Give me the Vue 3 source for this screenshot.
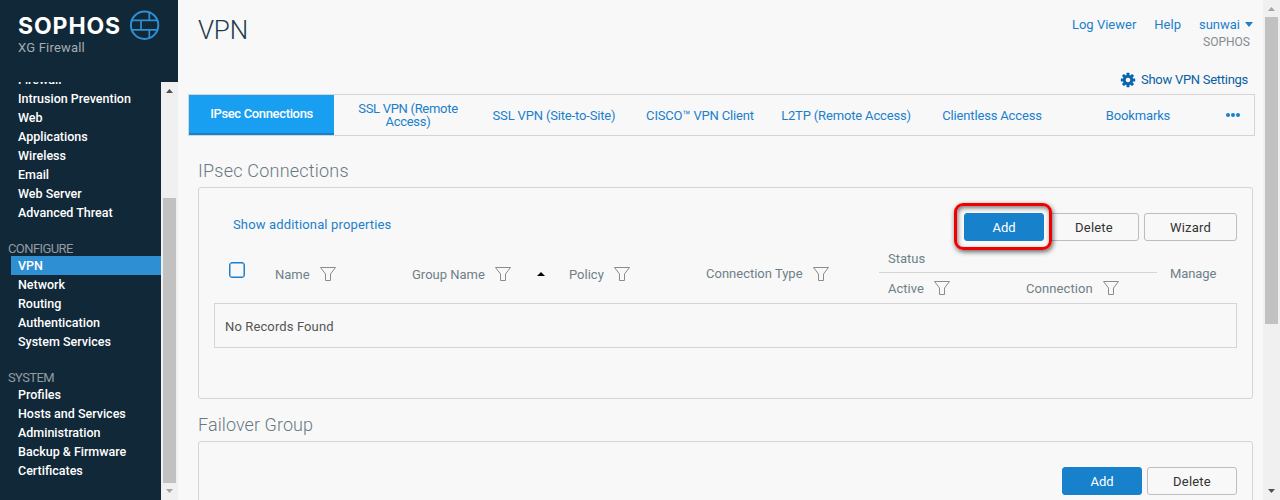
<template>
  <div class="app">
    <aside class="sidebar">
      <header class="brand">
        <div class="brand-text">
          <div class="brand-name">SOPHOS</div>
          <div class="brand-product">XG Firewall</div>
        </div>
        <svg class="brand-icon" width="32" height="32" viewBox="0 0 32 32" fill="none" stroke="#2f8fd3" stroke-width="2">
          <circle cx="16.6" cy="16.2" r="13.7" />
          <path d="M4 11.3H29.2M4 20.8H29.2M13 11.3V20.8M21.3 3.6V11.3M21.3 20.8V28.6" stroke-width="1.7" />
        </svg>
      </header>
      <div class="nav-area">
        <nav class="nav">
          <template v-for="group in groups" :key="group.label">
            <div v-if="group.label" class="nav-label">{{ group.label }}</div>
            <a
              v-for="item in group.items"
              :key="item"
              class="nav-item"
              :class="{ active: item === 'VPN' }"
            >{{ item }}</a>
          </template>
        </nav>
        <div class="scrollbar nav-scroll">
          <span class="arrow up"></span>
          <span class="thumb"></span>
          <span class="arrow down muted"></span>
        </div>
      </div>
    </aside>

    <main class="main">
      <header class="topbar">
        <h1>VPN</h1>
        <div class="account">
          <div class="account-links">
            <a class="log">Log Viewer</a>
            <a class="help">Help</a>
            <a class="user">sunwai<span class="caret"></span></a>
          </div>
          <div class="company">SOPHOS</div>
          <a class="settings">
            <svg width="16" height="16" viewBox="0 0 16 16">
              <g fill="#0a66ad">
                <rect v-for="a in [0, 45, 90, 135]" :key="a" x="6.5" y="0.8" width="3" height="14.4" rx="0.5" :transform="`rotate(${a} 8 8)`" />
                <circle cx="8" cy="8" r="5.2" />
              </g>
              <circle cx="8" cy="8" r="2.3" fill="#f8f8f8" />
            </svg>
            <span>Show VPN Settings</span>
          </a>
        </div>
      </header>

      <div class="tabs">
        <a v-for="(tab, i) in tabs" :key="tab" class="tab" :class="{ active: i === 0 }"><span>{{ tab }}</span></a>
        <a class="more"><i></i><i></i><i></i></a>
      </div>

      <h2>IPsec Connections</h2>
      <section class="panel connections">
        <div class="toolbar">
          <a class="show-more">Show additional properties</a>
          <div class="buttons">
            <div class="highlight"><button class="btn primary">Add</button></div>
            <button class="btn delete">Delete</button>
            <button class="btn wizard">Wizard</button>
          </div>
        </div>
        <div class="thead">
          <div class="check"><span class="checkbox"></span></div>
          <div v-for="col in columns" :key="col.key" class="th" :class="col.key">
            <span class="th-text">{{ col.text }}</span>
            <svg class="filter" width="16" height="14" viewBox="0 0 16 14"><path :d="filterPath" /></svg>
            <span v-if="col.sorted" class="sort"></span>
          </div>
          <div class="status">
            <div class="status-title">Status</div>
            <div class="status-cols">
              <div class="th active-col">
                <span class="th-text">Active</span>
                <svg class="filter" width="16" height="14" viewBox="0 0 16 14"><path :d="filterPath" /></svg>
              </div>
              <div class="th connection-col">
                <span class="th-text">Connection</span>
                <svg class="filter" width="16" height="14" viewBox="0 0 16 14"><path :d="filterPath" /></svg>
              </div>
            </div>
          </div>
          <div class="manage">Manage</div>
        </div>
        <div class="empty">No Records Found</div>
      </section>

      <h2 class="failover-title">Failover Group</h2>
      <section class="panel failover">
        <div class="buttons">
          <button class="btn primary">Add</button>
          <button class="btn delete">Delete</button>
        </div>
      </section>
    </main>

    <div class="scrollbar page-scroll">
      <span class="arrow up muted"></span>
      <span class="thumb"></span>
      <span class="arrow down"></span>
    </div>
  </div>
</template>

<script setup>
const groups = [
  {
    label: '',
    items: ['Firewall', 'Intrusion Prevention', 'Web', 'Applications', 'Wireless', 'Email', 'Web Server', 'Advanced Threat']
  },
  {
    label: 'CONFIGURE',
    items: ['VPN', 'Network', 'Routing', 'Authentication', 'System Services']
  },
  {
    label: 'SYSTEM',
    items: ['Profiles', 'Hosts and Services', 'Administration', 'Backup & Firmware', 'Certificates']
  }
]

const tabs = [
  'IPsec Connections',
  'SSL VPN (Remote Access)',
  'SSL VPN (Site-to-Site)',
  'CISCO™ VPN Client',
  'L2TP (Remote Access)',
  'Clientless Access',
  'Bookmarks'
]

const columns = [
  { key: 'name', text: 'Name' },
  { key: 'group', text: 'Group Name', sorted: true },
  { key: 'policy', text: 'Policy' },
  { key: 'type', text: 'Connection Type' }
]

const filterPath = 'M0.5 0.5H15.5L10.5 7V13.5H5.5V7Z'
</script>

<style>
body {
  background: #f8f8f8;
  overflow: hidden;
}
</style>

<style scoped>
.app {
  display: flex;
  width: 1280px;
  height: 500px;
  overflow: hidden;
  background: #f8f8f8;
  font-family: Roboto, 'Liberation Sans', sans-serif;
  font-size: 13px;
  line-height: 19px;
}

.app * {
  box-sizing: border-box;
}

h1,
h2 {
  margin: 0;
  font-weight: 300;
}

/* Sidebar */
.sidebar {
  width: 178px;
  flex: none;
  display: flex;
  flex-direction: column;
  background: #112838;
}

.brand {
  height: 82px;
  flex: none;
  display: flex;
  padding: 9px 0 0 18px;
}

.brand-text {
  width: 110px;
}

.brand-name {
  margin-top: 4px;
  height: 26px;
  font-family: Inter, sans-serif;
  font-size: 23px;
  line-height: 26px;
  font-weight: 700;
  letter-spacing: 0.9px;
  color: #fff;
}

.brand-product {
  color: #a3adb4;
  line-height: 18px;
  letter-spacing: 0.2px;
}

.nav-area {
  flex: 1;
  min-height: 0;
  display: flex;
}

.nav {
  width: 161px;
  overflow: hidden;
  white-space: nowrap;
}

.nav-item {
  display: block;
  height: 19px;
  margin-left: 11px;
  padding-left: 7px;
  color: #fff;
  font-weight: 500;
  font-size: 12.5px;
}

.nav-item:first-child {
  margin-top: -12px;
}

.nav-item.active {
  background: #2f8fd3;
}

.nav-label {
  height: 34px;
  padding: 17px 0 0 8px;
  line-height: 19px;
  letter-spacing: -0.6px;
  color: #929ba1;
}

/* Scrollbars */
.scrollbar {
  width: 17px;
  flex: none;
  display: flex;
  flex-direction: column;
  align-items: center;
  background: #f0f0f0;
}

.scrollbar .thumb {
  width: 13px;
  background: #c1c1c1;
}

.arrow {
  width: 7px;
  height: 4px;
  background: #505050;
}

.arrow.up {
  clip-path: polygon(50% 0, 100% 100%, 0 100%);
}

.arrow.down {
  clip-path: polygon(0 0, 100% 0, 50% 100%);
}

.arrow.muted {
  background: #a3a3a3;
}

.nav-scroll .up {
  margin-top: 7px;
}

.nav-scroll .thumb {
  height: 285px;
  margin: 105px 0 6px;
}

.page-scroll .up {
  margin-top: 7px;
}

.page-scroll .thumb {
  height: 307px;
  margin: 6px 0 165px;
}

/* Main */
.main {
  width: 1085px;
  flex: none;
  padding: 0 8px 0 10px;
}

a {
  color: #1b7fcc;
}

.topbar {
  display: flex;
  justify-content: space-between;
  height: 94px;
  padding: 15px 0 0 10px;
}

h1 {
  font-size: 26px;
  line-height: 30px;
  letter-spacing: -0.2px;
  color: #20384a;
}

.account {
  display: flex;
  flex-direction: column;
  align-items: flex-end;
}

.account-links {
  display: flex;
  gap: 18px;
}

.caret {
  display: inline-block;
  margin: 0 2px 2px 5px;
  border: 4px solid transparent;
  border-top: 5px solid #1b7fcc;
  border-bottom: 0;
}

.company {
  margin: -1px 5px 0 0;
  color: #858b91;
  font-size: 12px;
}

.settings {
  display: flex;
  align-items: center;
  gap: 5px;
  margin: 18px 7px 0 0;
  letter-spacing: -0.28px;
  color: #0a5fa3;
}

.tabs {
  display: flex;
  width: 1067px;
  height: 42px;
  border: 1px solid #d5d5d5;
}

.tab {
  width: 146px;
  display: flex;
  align-items: center;
  justify-content: center;
  padding: 0 20px;
  text-align: center;
  line-height: 13px;
  letter-spacing: -0.16px;
  white-space: nowrap;
}

.tab:nth-child(2) {
  letter-spacing: -0.3px;
  white-space: normal;
}

.tab.active {
  width: 145px;
  margin-right: 1px;
  padding-bottom: 1px;
  color: #fff;
  font-weight: 500;
  letter-spacing: -0.35px;
  background: #189ff2;
  border-bottom: 2px solid #1780cb;
}

.more {
  flex: 1;
  display: flex;
  align-items: center;
  justify-content: center;
  gap: 1px;
  padding-bottom: 1px;
}

.more i {
  width: 4px;
  height: 4px;
  border-radius: 50%;
  background: #1b7fcc;
}

h2 {
  margin: 23px 0 0 10px;
  height: 28px;
  font-size: 18px;
  line-height: 24px;
  letter-spacing: 0.22px;
  color: #697983;
}

.panel {
  width: 1055px;
  margin-left: 10px;
  border: 1px solid #d5d5d5;
  border-radius: 3px;
}

.connections {
  height: 212px;
  padding: 25px 15px 0;
}

.toolbar {
  display: flex;
  justify-content: space-between;
  height: 30px;
}

.show-more {
  margin: 2px 0 0 19px;
  letter-spacing: 0.15px;
}

.buttons {
  display: flex;
  justify-content: flex-end;
  gap: 5px;
}

.btn {
  height: 28px;
  padding: 0;
  border: 1px solid #bdbdbd;
  border-radius: 3px;
  background: #f8f8f8;
  color: #333;
  font: inherit;
  letter-spacing: 0.2px;
}

.btn.primary {
  width: 80px;
  background: #1881cb;
  border-color: #1881cb;
  color: #fff;
  letter-spacing: 0;
}

.btn.delete {
  width: 90px;
}

.btn.wizard {
  width: 93px;
}

/* Callout ring drawn round the Add button */
.highlight {
  position: relative;
}

.highlight::after {
  content: '';
  position: absolute;
  inset: -10px -8px -7px -10px;
  border: 3px solid #f20000;
  border-radius: 9px;
  box-shadow: 1px 2px 5px rgba(0, 0, 0, 0.6), inset 1px 2px 4px rgba(0, 0, 0, 0.5);
}

.thead {
  display: flex;
  height: 60px;
  color: #6f7f89;
}

.check {
  width: 61px;
  padding: 19px 0 0 15px;
}

.checkbox {
  display: block;
  width: 16px;
  height: 16px;
  border: 1.5px solid #1b7fcc;
  border-radius: 3px;
  box-shadow: inset 0 0 0 0.5px #1b7fcc;
}

.th {
  display: flex;
  align-items: center;
  height: 62px;
  gap: 10px;
  white-space: nowrap;
}

.filter {
  flex: none;
  fill: none;
  stroke: #8b8b8b;
}

.sort {
  margin-left: 16px;
  border: 4px solid transparent;
  border-bottom-color: #000;
  border-top: 0;
}

.name {
  width: 137px;
}

.group {
  width: 157px;
}

.policy {
  width: 137px;
}

.type {
  width: 173px;
}

.type .th-text {
  padding-bottom: 1px;
}

.status {
  width: 278px;
}

.status-title {
  height: 30px;
  padding: 6px 0 0 9px;
  border-bottom: 1px solid #d5d5d5;
}

.status-cols {
  display: flex;
  padding-left: 9px;
}

.status-cols .th {
  height: 30px;
}

.active-col {
  width: 138px;
}

.connection-col {
  letter-spacing: 0.08px;
}

.manage {
  padding: 21px 0 0 13px;
  letter-spacing: -0.1px;
}

.empty {
  height: 45px;
  padding-left: 10px;
  border: 1px solid #d5d5d5;
  line-height: 45px;
  letter-spacing: 0.12px;
  color: #555;
}

.failover-title {
  margin-top: 14px;
  letter-spacing: 0.08px;
}

.failover {
  height: 200px;
  padding: 25px 15px 0;
}
</style>
